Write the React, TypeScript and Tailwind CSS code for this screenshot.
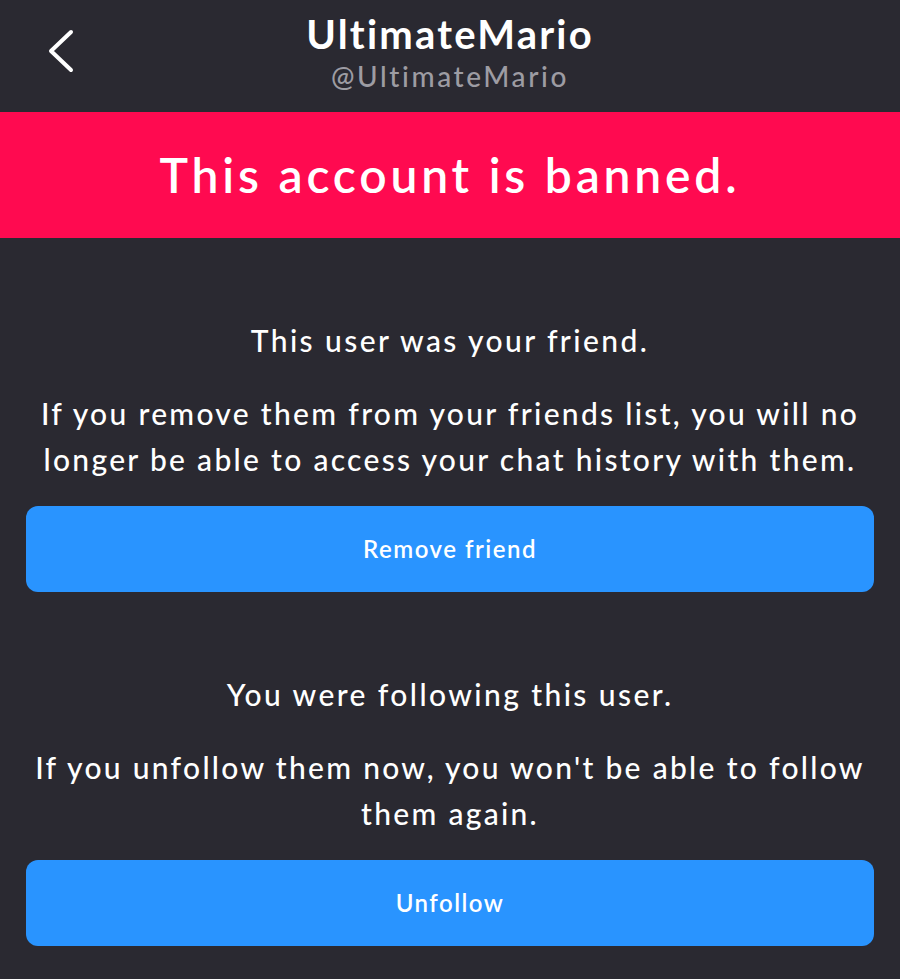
function Section({ title, body, action }: { title: string; body: string; action: string }) {
  return (
    <div className="flex flex-col items-center">
      <p className="text-[30px] leading-[36px] font-medium tracking-[2.4px] text-white">{title}</p>
      <p className="mt-[32px] px-[4px] text-center text-[30px] leading-[46px] font-medium tracking-[2.3px] text-white">
        {body}
      </p>
      <button className="mt-[24px] h-[86px] w-full rounded-[12px] bg-[#2994ff] text-[24px] font-semibold tracking-[1.5px] text-white">
        {action}
      </button>
    </div>
  )
}

export default function App() {
  return (
    <div className="min-h-[979px] w-[900px] bg-[#2a2931] font-['Lato',sans-serif] [font-variant-ligatures:none]">
      {/* Header */}
      <div className="relative flex h-[112px] flex-col items-center pt-[10px]">
        <button className="absolute left-[44px] top-[28px] text-white">
          <svg width="34" height="46" viewBox="0 0 34 46" fill="none">
            <path d="M27 4 L7 23 L27 42" stroke="currentColor" strokeWidth="4" strokeLinecap="round" strokeLinejoin="round" />
          </svg>
        </button>
        <h1 className="text-[40px] leading-[48px] font-bold tracking-[2.2px] text-white">UltimateMario</h1>
        <p className="text-[28px] leading-[36px] font-medium tracking-[2.6px] text-[#9d9ca3]">@UltimateMario</p>
      </div>

      {/* Banned banner */}
      <div className="flex h-[126px] items-center justify-center bg-[#ff0a50]">
        <p className="text-[48px] font-semibold tracking-[3.8px] text-white">This account is banned.</p>
      </div>

      <div className="flex flex-col gap-[84px] px-[26px] pt-[84px]">
        <Section
          title="This user was your friend."
          body="If you remove them from your friends list, you will no longer be able to access your chat history with them."
          action="Remove friend"
        />
        <Section
          title="You were following this user."
          body="If you unfollow them now, you won't be able to follow them again."
          action="Unfollow"
        />
      </div>
    </div>
  )
}
